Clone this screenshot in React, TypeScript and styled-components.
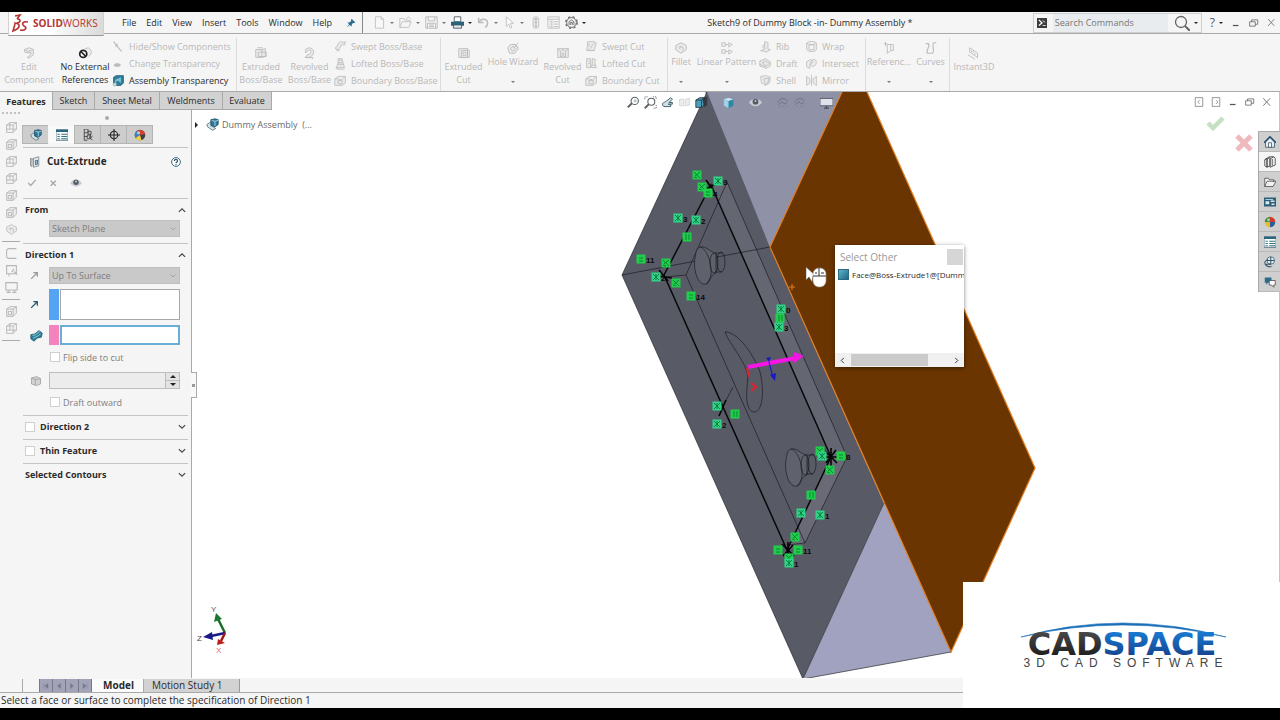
import React from "react";
import styled, { createGlobalStyle, css } from "styled-components";

const color = {
  chrome: "#f5f5f5",
  line: "#a9a9a9",
  text: "#2b2b2b",
  muted: "#b8b8b8",
  tab: "#d2d2d2",
};

const Global = createGlobalStyle`
  * { box-sizing: border-box; }
  body { margin: 0; background: #000; }
  body, button, input, select { font-family: "Open Sans", "Noto Sans", sans-serif; }
  button { border: 0; padding: 0; margin: 0; background: none; color: inherit; font-size: inherit; line-height: inherit; }
  a { color: inherit; text-decoration: none; }
  h2, h3, ul { margin: 0; padding: 0; list-style: none; }
`;

/* ---------- icons ---------- */

const S = "#777";
const glyphs: Record<string, React.ReactNode> = {
  pin: <g fill="#2c6f92"><path d="M9 1l6 6-2 1-2 0-2 3 0 3-3-3-5 4 4-5-3-3 3 0 3-2 0-2z" /></g>,
  page: <path d="M3 1h7l3 3v11H3zM10 1v3h3" fill="#fafafa" stroke={S} />,
  folder: <path d="M1 14V3h5l1 2h6v2M1 14l3-7h11l-3 7zM9 3l3-2 3 3" fill="none" stroke={S} />,
  save: <path d="M1 1h14v14H1zM4 1v5h8V1M3 15V9h10v6M5 11h6M5 13h6" fill="none" stroke={S} strokeWidth="1.2" />,
  print: (
    <g>
      <path d="M4 1h8v6H4z" fill="#fff" stroke="#3c4a55" />
      <path d="M0 7h16v5H0z" fill="#27637f" />
      <path d="M3 11h10v4H3z" fill="#dce6ea" stroke="#3c4a55" />
    </g>
  ),
  undo: <path d="M2 2v6h6M2 8c3-6 11-5 11 1 0 2-1 4-3 5" fill="none" stroke={S} strokeWidth="1.8" />,
  cursor: <path d="M4 1v12l3-3 2 5 2-1-2-5h4z" fill="#fff" stroke={S} />,
  traffic: (
    <g fill={S}>
      <rect x="5" y="1" width="7" height="14" rx="3" fill="#ddd" stroke={S} />
      <circle cx="8.500" cy="4" r="1.500" /><circle cx="8.500" cy="8" r="1.500" /><circle cx="8.500" cy="12" r="1.500" />
    </g>
  ),
  list: <path d="M1 1h14v14H1zM1 4h14M6 4v11M3 7h2M3 10h2M3 13h2M8 7h6M8 10h6M8 13h6" fill="none" stroke={S} />,
  gear: (
    <g fill="none" stroke="#555">
      <circle cx="8" cy="8" r="6" strokeWidth="1.100" />
      <circle cx="8" cy="8" r="7.200" strokeWidth="1.300" strokeDasharray="2.800 2.930" />
      <path d="M5 11V7l3-2 3 2v4M7 11V8h2v3" />
    </g>
  ),
  editComp: <path d="M3 4l5-2 5 2v6l-5 4-2-1 4-3V7L7 8 3 7zM3 4l4 2 6-2M7 6v2" fill="#ddd" stroke={S} />,
  noExt: (
    <g>
      <path d="M8 3l4-1 3 3v4l-3 3" fill="#eee" stroke="#bbb" />
      <circle cx="6" cy="9" r="4" fill="#fff" stroke="#222" strokeWidth="2" />
      <path d="M3 6l6 6" stroke="#222" strokeWidth="2" />
    </g>
  ),
  hide: <path d="M2 2l7 9 3 3M4 8l3-3" stroke={S} strokeWidth="1.500" fill="none" />,
  change: <path d="M2 10c1-3 8-3 9 0l-2 2H4z" fill={S} />,
  asmTrans: (
    <g>
      <path d="M2 4l3-2h9v9l-3 3H2z" fill="#2c8099" stroke="#215b74" />
      <path d="M4 7l7-3v7l-4-3-3 3z" fill="#7fc0d2" />
      <path d="M0 13l4-3 2 3-3 3z" fill="#c6d2d6" />
    </g>
  ),
  extrude: <path d="M2 4h7v9H2zM9 4l4-1v9l-4 1M5 7h9v5H5zM4 2h6" fill="#ddd" stroke={S} />,
  revolve: <path d="M3 4c4-4 10-1 9 4-1 4-5 6-9 5l2-3c3 0 4-2 4-4S6 4 3 8zM2 13h9v2" fill="#ddd" stroke={S} />,
  sweep: <path d="M2 9c3 0 2-6 6-7l4 1 2-1-1 4-4 0c-2 1 0 5-4 6l-3-1zM3 13h4" fill="#ddd" stroke={S} />,
  sweepCut: <path d="M3 2h9l2 2-3 9H2l1-5zM4 12c4-1 3-6 9-9M5 4v4M7 13h5" fill="#ddd" stroke={S} />,
  loft: <path d="M5 2h5l1 5 2 6H3l2-6zM4 9h8M6 4h4M5 7h6M2 13l2 2h9" fill="#ddd" stroke={S} />,
  loftCut: <path d="M2 2h5v11H2zM9 2l4 1-1 4 2 6H8l1-6zM4 5h2M4 8h2M9 10h4" fill="#ddd" stroke={S} />,
  boundary: <path d="M1 6l4-3h9v8l-4 3H1zM5 8h5v4H5zM1 6h4l4 1 5-4" fill="#ddd" stroke={S} />,
  wizard: <path d="M2 8l3-4h6l3 5-4 5H4zM5 9l3-3 3 3-3 3zM9 3l5 5M14 2l-5 6" fill="#ddd" stroke={S} />,
  cut: <path d="M2 3h10v10H2zM5 5h7v8H5zM12 3l2 2v8h-2M7 7h3v4H7z" fill="#e4e4e4" stroke={S} />,
  cutRev: <path d="M2 3h12v10H2zM5 6c1-2 5-2 6 0v6H9V8H7v4H5zM2 3l3 3M14 3l-3 3" fill="#e4e4e4" stroke={S} />,
  fillet: <path d="M2 5l6-3 6 3v5l-6 4-6-4zM5 7c4-2 7 1 5 4M6 9l3-3" fill="#ddd" stroke={S} />,
  pattern: <path d="M2 2h4v4H2zM2 10h4v4H2zM10 2l4 2-4 3zM10 10l4 2-4 3zM6 4h3M6 12h3" fill="#eee" stroke={S} />,
  rib: <path d="M2 13l5-2V2l4 1v8l3 1-5 3zM7 11l-3-3 3-3" fill="#ddd" stroke={S} />,
  draft: <path d="M1 5l7-3 6 4v5l-5 3-8-3zM4 7l4-2 5 3-4 3zM1 9l8 3" fill="#ddd" stroke={S} />,
  shell: <path d="M2 3l6-1 6 2-1 7-5 3-5-3zM6 6l6-1-1 6-3 2z" fill="#ddd" stroke={S} />,
  wrap: <path d="M2 4c2-3 10-3 12 0v8c-2 3-10 3-12 0zM5 6v6h6V6zM2 4c2 2 10 2 12 0" fill="#e4e4e4" stroke={S} />,
  intersect: <path d="M2 12V6l5-3 3 3-4 3v5zM7 9c-1-8 8-7 7-2s-6 6-7 2z" fill="#e4e4e4" stroke={S} />,
  mirror: <path d="M2 3l4 3v5l-4 3zM14 3l-4 3v5l4 3zM8 1v14" fill="#e4e4e4" stroke={S} />,
  reference: <path d="M2 3h4M4 1v5M6 4h7v7l-3 0-4 3zM10 4v7" fill="none" stroke={S} />,
  curves: <path d="M2 3h3c3 4-4 7-1 11h6c3-4-2-7 1-12h3" fill="none" stroke={S} strokeWidth="1.300" />,
  instant: <path d="M3 2v5l9 6M3 2l9 6v6M5 5v2M7 6v2M9 8v2M1 10l8 5" fill="none" stroke={S} />,
  lens: (
    <g fill="none" stroke="#5b6166">
      <circle cx="9.500" cy="6" r="4.500" strokeWidth="1.300" />
      <path d="M6 9l-5 5" strokeWidth="2.400" />
      <path d="M8 6h4M10 4v4" stroke="#8aa" />
    </g>
  ),
  lensArea: (
    <g fill="none" stroke="#5b6166">
      <path d="M1 4V1h4M11 1h4v3M15 11v4h-4" strokeDasharray="1.500 1" />
      <circle cx="9" cy="7" r="4.300" strokeWidth="1.300" /><path d="M6 10l-5 5" strokeWidth="2.400" />
    </g>
  ),
  prevView: <path d="M2 11C1 8 5 8 7 6l5-4 2 2-4 4h4v2H9l3 1v2H5c-2 0-3-1-3-2z" fill="#cfe0e6" stroke="#46606b" strokeWidth="1.200" />,
  section: <path d="M2 4h5v8H2zM9 4l5-1v8l-5 1z" fill="#ddd" stroke="#999" />,
  cubeView: (
    <g>
      <path d="M1 5l5-3h6v8l-4 4H1z" fill="#4d9dbb" stroke="#23323a" />
      <path d="M1 5h7v9M8 5l4-3" fill="none" stroke="#23323a" /><path d="M9 3l6-2v10l-4 3z" fill="#343a42" />
    </g>
  ),
  display: (
    <g>
      <path d="M2 4l6-2 6 2v8l-6 3-6-3z" fill="#2f86a5" />
      <path d="M2 4l6 2v9l-6-3z" fill="#9fd2e2" /><path d="M2 4l6-2 6 2-6 2z" fill="#c9e6ee" />
    </g>
  ),
  eye: <g><path d="M0 8c4-6 12-6 16 0-4 6-12 6-16 0z" fill="#c9ccd2" /><circle cx="8" cy="7" r="3.600" fill="#555a66" /><circle cx="8" cy="6" r="1.200" fill="#aeb" /></g>,
  scene: <path d="M2 8c3-6 9-6 12-2M3 11l4-4 4 3 3-3M5 13h1M9 13h1M13 13h1" stroke="#666b78" fill="none" />,
  monitor: <g><path d="M0 3h16v9H0z" fill="#dfe2ea" stroke="#4b4e58" /><path d="M5 15h6M8 12v3" stroke="#4b4e58" strokeWidth="1.500" /></g>,
  feature: (
    <g>
      <path d="M7 4L1 8l1 3 6 4 4-2-6-4 1-2z" fill="#d2e2e8" stroke="#5e6f78" />
      <path d="M6 2l5-1 4 1v6l-4 3-5-2z" fill="#2c7898" stroke="#1d5069" /><path d="M7 3l4 1 4-1M11 4v6" stroke="#bfe0ea" fill="none" />
    </g>
  ),
  props: <g><path d="M0 1h16v14H0z" fill="#fff" stroke="#31546a" /><path d="M0 1h16v3H0z" fill="#27677f" /><path d="M2 7h3M2 10h3M2 13h3M7 7h8M7 10h8M7 13h8" stroke="#31747f" strokeWidth="1.500" /></g>,
  config: <g fill="none" stroke="#444" strokeWidth="1.200"><path d="M3 0h5v5H3zM3 5v10h4M3 10h4M8 3h4v4H8zM7 8h4v5H7zM12 7l-2 4 4 4M11 13l3-4" /></g>,
  target: <g fill="none" stroke="#222" strokeWidth="1.400"><circle cx="8" cy="8" r="5" /><path d="M8 0v16M0 8h16" /></g>,
  ball: (
    <g>
      <circle cx="8" cy="8" r="7" fill="#e9bb2e" />
      <path d="M8 8L1 8A7 7 0 0 1 8 1z" fill="#3b8f4a" /><path d="M8 8V1a7 7 0 0 1 7 7z" fill="#cf3b30" />
      <path d="M8 8h7a7 7 0 0 1-7 7z" fill="#2a5f9e" /><circle cx="6" cy="5" r="2" fill="#fff" opacity="0.550" />
    </g>
  ),
  panelBall: (
    <g>
      <circle cx="8" cy="8" r="7" fill="#3a3f48" />
      <path d="M8 8L2 12A7 7 0 0 1 5 2z" fill="#3f83b8" /><path d="M8 8L5 2a7 7 0 0 1 10 5z" fill="#d8402f" />
      <path d="M8 8L2 12a7 7 0 0 0 8 3z" fill="#f0d23c" /><circle cx="6" cy="5" r="2" fill="#fff" opacity="0.650" />
    </g>
  ),
  cutExtrude: <g><path d="M2 3l2 1v10l-2-1zM4 4h2M6 3l7-2v12l-7 2z" fill="#e2e6e9" stroke="#707a82" /><path d="M8 6l4-1v6l-4 1z" fill="#2f6f8d" /><path d="M9 7l2-1v4l-2 1z" fill="#9cc3d3" /></g>,
  help: <g><circle cx="8" cy="8" r="7" fill="#fff" stroke="#3a6c86" strokeWidth="1.600" /><path d="M5.500 6.500c0-4 5-3 5 0 0 1.500-2.500 1.500-2.500 3.500M8 11.500v1.500" fill="none" stroke="#33505f" strokeWidth="1.900" /></g>,
  check: <path d="M2 8l4 4 8-9" fill="none" stroke="#a9a9a9" strokeWidth="2.200" />,
  cross: <path d="M3 3l9 9M12 3l-9 9" stroke="#a4a4a4" strokeWidth="2.200" />,
  arrow: <path d="M2 14L12 4M6 3h7v7" fill="none" stroke="currentColor" strokeWidth="2.200" />,
  surface: <g><path d="M1 7l5-1 5-4 4 3-1 5-5 1-4 4-4-3z" fill="#2f8299" stroke="#1d5a70" /><path d="M3 8l4-1 5-4M4 11l5-2 4-3" stroke="#9ad0dc" fill="none" /></g>,
  draftAngle: <path d="M2 4l7-2 5 3v7l-5 2-7-2zM7 6l7-1M7 6v8M2 4l5 2" fill="#d4d4d4" stroke="#999" />,
  cubeA: <path d="M2 5l4-3h8v8l-4 4H2zM2 5h8v9M10 5l4-3M6 2v8H2M6 10h8" fill="none" stroke="#b0b0b0" />,
  cubeB: <path d="M2 5l4-3h8v8l-4 4H2zM2 5h8v9M10 5l4-3M4 8h4v4H4z" fill="#eee" stroke="#b0b0b0" />,
  sheet: <path d="M14 2H4L2 4v8l2 2h10" fill="none" stroke="#b5b5b5" strokeWidth="1.300" />,
  note: <path d="M2 2h12v10H2zM5 12v3M11 9l4 4M8 10l3-4" fill="none" stroke="#b5b5b5" strokeWidth="1.300" />,
  screen: <path d="M1 2h14v9H1zM4 11v3M2 14h5M12 11v3M9 14h5" fill="none" stroke="#b5b5b5" strokeWidth="1.300" />,
  home: <g><path d="M2 8l6-6 6 6v7H2z" fill="#e6eef2" stroke="#2d4f63" /><path d="M0 9l8-8 8 8" fill="none" stroke="#234d68" strokeWidth="2" /><path d="M6 9h4v6H6z" fill="#fff" stroke="#2d4f63" /></g>,
  library: <g fill="#eee" stroke="#333"><path d="M1 5l3-2 0 12-3-2zM4 4l4-2v11l-4 2zM8 4l5-3 2 2v9l-7 3zM11 4v9M1 5l6-4 6 0" /></g>,
  open: <path d="M1 14V3h5l1 2h6v3M1 14l3-7h12l-4 7z" fill="#f1f1f1" stroke="#444" />,
  palette: <g><path d="M0 2h16v12H0z" fill="#2b6078" /><path d="M2 7h5v4H2zM9 6h5v2H9zM10 10h4v2h-4zM2 4h10v1H2z" fill="#dfeaf0" /></g>,
  forum: <g fill="#e6eef2" stroke="#31546a"><circle cx="9" cy="6" r="5" /><path d="M1 8l4-4M1 8c0 5 5 7 9 6M9 1v10M4 6h10M3 11h6" fill="none" strokeWidth="1.400" /></g>,
  chat: <g><path d="M1 2h9v7H5l-2 3V9H1z" fill="#2d6b8a" /><path d="M7 6h8v6h-2v3l-3-3H7z" fill="#fff" stroke="#444" /></g>,
  min: <path d="M3 12h9" stroke="#555" strokeWidth="2" />,
  restore: <path d="M1 6h9v7H1zM4 6V3h10v7h-4" fill="none" stroke="#666" strokeWidth="1.300" />,
  close: <path d="M2 2l11 12M13 2L2 14" stroke="#666" strokeWidth="1.400" />,
  paneL: <path d="M2 1h12v14H2zM9 5L6 8l3 3" fill="none" stroke="#777" strokeWidth="1.200" />,
  paneR: <path d="M2 1h12v14H2zM8 5l3 3-3 3" fill="none" stroke="#777" strokeWidth="1.200" />,
  terminal: <g><path d="M0 0h16v16H0z" fill="#3d3d3d" /><path d="M3 3l5 5-5 4" fill="none" stroke="#fff" strokeWidth="2" /><path d="M9 12h5M9 4l4 3" stroke="#ddd" strokeWidth="1.500" /></g>,
  search: <g fill="none" stroke="#666"><circle cx="7" cy="7" r="5.500" strokeWidth="1.300" /><path d="M11 11l5 5" strokeWidth="2" /></g>,
  up: <path d="M3 11l5-5 5 5" fill="none" stroke="#444" strokeWidth="1.800" />,
  down: <path d="M3 5l5 5 5-5" fill="none" stroke="#444" strokeWidth="1.800" />,
  left: <path d="M11 2L5 8l6 6" fill="none" stroke="#333" strokeWidth="2.200" />,
  right: <path d="M5 2l6 6-6 6" fill="none" stroke="#333" strokeWidth="2.200" />,
};

const Glyph = styled.svg<{ $size: number; $faded?: boolean }>`
  display: block;
  flex: none;
  width: ${(p) => p.$size}px;
  height: ${(p) => p.$size}px;
  opacity: ${(p) => (p.$faded ? 0.45 : 1)};
`;

function Icon({ name, size = 12, faded }: { name: string; size?: number; faded?: boolean }) {
  return (
    <Glyph viewBox="0 0 16 16" $size={size} $faded={faded} aria-hidden="true">
      {glyphs[name]}
    </Glyph>
  );
}

const Caret = styled.span<{ $dark?: boolean }>`
  width: 0;
  height: 0;
  border: 2px solid transparent;
  border-top-color: ${(p) => (p.$dark ? "#222" : "#777")};
  border-bottom: 0;
`;

/* ---------- frame ---------- */

const Page = styled.div`
  display: flex;
  flex-direction: column;
  min-height: 100vh;
  padding: 12px 0;
  position: relative;
  color: ${color.text};
  font-size: 9px;
  line-height: 13px;
`;

const TitleBar = styled.header`
  display: flex;
  align-items: center;
  height: 22px;
  background: ${color.chrome};
  border-bottom: 1px solid ${color.line};
`;

const Brand = styled.div`
  align-self: flex-start;
  display: flex;
  align-items: center;
  gap: 4px;
  width: 96px;
  height: 24px;
  margin-left: 8px;
  padding-left: 3px;
  position: relative;
  z-index: 2;
  flex: none;
  color: #b5342f;
  font-size: 10px;
  background: linear-gradient(100deg, #fff 45%, #d9d9d9);
  border: 1px solid #d0d0d0;
  border-top: 0;
  border-bottom-color: #999;
`;

const BrandMark = styled.svg`
  width: 17px;
  height: 19px;
`;

const Menu = styled.nav`
  display: flex;
  gap: 10px;
  margin-left: 18px;
  width: 222px;
  flex: none;
`;

const PinButton = styled.button`
  display: flex;
  align-items: center;
  width: 19px;
  padding-left: 2px;
  height: 21px;
  border-right: 1px solid #888;
  flex: none;
`;

const QuickTools = styled.div`
  display: flex;
  align-items: center;
  flex: none;
  margin-left: 10px;
`;

const QuickButton = styled.button<{ $w: number }>`
  display: flex;
  align-items: center;
  gap: 4px;
  width: ${(p) => p.$w}px;
`;

const DocTitle = styled.div`
  flex: 1;
  text-align: center;
  white-space: nowrap;
  overflow: hidden;
`;

const SearchBox = styled.form`
  display: flex;
  align-items: center;
  width: 169px;
  height: 20px;
  border: 1px solid #cfcfcf;
  padding: 0 3px;
  gap: 6px;
  flex: none;
`;

const SearchInput = styled.input`
  flex: 1;
  min-width: 0;
  height: 18px;
  border: 0;
  padding: 0 2px;
  background: #e8ecef;
  font-size: 9px;
  &::placeholder { color: #777; opacity: 1; }
`;

const PlainButton = styled.button`
  display: flex;
  align-items: center;
  gap: 4px;
`;

const WindowButtons = styled.div`
  display: flex;
  align-items: center;
  gap: 8px;
  padding: 0 4px 0 8px;
  flex: none;
  font-size: 12px;
  font-weight: 600;
  color: #555;
`;

/* ---------- ribbon ---------- */

const Ribbon = styled.div`
  display: flex;
  height: 58px;
  background: ${color.chrome};
  border-bottom: 1px solid ${color.line};
  padding-top: 4px;
`;

const Group = styled.div<{ $w: number }>`
  display: flex;
  flex: none;
  width: ${(p) => p.$w}px;
  border-right: 1px solid #dcdcdc;
`;

const BigButton = styled.button<{ $w: number; $on?: boolean; $high?: boolean }>`
  display: flex;
  flex-direction: column;
  align-items: center;
  width: ${(p) => p.$w}px;
  padding-top: ${(p) => (p.$high ? 3 : 8)}px;
  color: ${(p) => (p.$on ? color.text : color.muted)};
  text-align: center;
  white-space: pre;
  flex: none;
  ${(p) =>
    p.$high &&
    css`
      & > ${Caret} { margin-top: 13px; }
    `}
`;

const CommandList = styled.div<{ $w: number }>`
  display: flex;
  flex-direction: column;
  width: ${(p) => p.$w}px;
  flex: none;
`;

const CommandButton = styled.button<{ $on?: boolean }>`
  display: flex;
  align-items: center;
  gap: 4px;
  height: 17px;
  color: ${(p) => (p.$on ? color.text : color.muted)};
  white-space: nowrap;
`;

type Big = { label: string; icon: string; w: number; on?: boolean; menu?: boolean };
type Col = { w: number; items: [string, string, boolean?][] };

const ribbon: { w: number; bigs: Big[]; cols: Col[] }[] = [
  {
    w: 237,
    bigs: [
      { label: "Edit\nComponent", icon: "editComp", w: 58 },
      { label: "No External\nReferences", icon: "noExt", w: 54, on: true },
    ],
    cols: [{ w: 120, items: [["hide", "Hide/Show Components"], ["change", "Change Transparency"], ["asmTrans", "Assembly Transparency", true]] }],
  },
  {
    w: 204,
    bigs: [
      { label: "Extruded\nBoss/Base", icon: "extrude", w: 48 },
      { label: "Revolved\nBoss/Base", icon: "revolve", w: 49 },
    ],
    cols: [{ w: 104, items: [["sweep", "Swept Boss/Base"], ["loft", "Lofted Boss/Base"], ["boundary", "Boundary Boss/Base"]] }],
  },
  {
    w: 227,
    bigs: [
      { label: "Extruded\nCut", icon: "cut", w: 45 },
      { label: "Hole Wizard", icon: "wizard", w: 54, menu: true },
      { label: "Revolved\nCut", icon: "cutRev", w: 45 },
    ],
    cols: [{ w: 80, items: [["sweepCut", "Swept Cut"], ["loftCut", "Lofted Cut"], ["boundary", "Boundary Cut"]] }],
  },
  {
    w: 198,
    bigs: [
      { label: "Fillet", icon: "fillet", w: 26, menu: true },
      { label: "Linear Pattern", icon: "pattern", w: 65, menu: true },
    ],
    cols: [
      { w: 46, items: [["rib", "Rib"], ["draft", "Draft"], ["shell", "Shell"]] },
      { w: 58, items: [["wrap", "Wrap"], ["intersect", "Intersect"], ["mirror", "Mirror"]] },
    ],
  },
  {
    w: 84,
    bigs: [
      { label: "Referenc...", icon: "reference", w: 46, menu: true },
      { label: "Curves", icon: "curves", w: 37, menu: true },
    ],
    cols: [],
  },
];

/* ---------- workspace ---------- */

const Workspace = styled.main`
  flex: 1;
  display: grid;
  grid-template-columns: 192px minmax(0, 1fr);
  grid-template-rows: 18px 1fr;
  background: #fff;
  position: relative;
`;

const CommandTabs = styled.nav`
  grid-column: 1 / 3;
  grid-row: 1;
  justify-self: start;
  display: flex;
  position: relative;
  z-index: 1;
  font-size: 9px;
`;

const CommandTab = styled.button<{ $active?: boolean; $w: number }>`
  width: ${(p) => p.$w}px;
  font-weight: ${(p) => (p.$active ? 700 : 400)};
  background: ${(p) => (p.$active ? color.chrome : color.tab)};
  border-right: 1px solid ${color.line};
  border-bottom: ${(p) => (p.$active ? "0" : `1px solid ${color.line}`)};
`;

const LeftDock = styled.aside`
  grid-column: 1;
  grid-row: 2;
  display: flex;
  background: ${color.chrome};
  border-right: 1px solid ${color.line};
  position: relative;
`;

const ViewStrip = styled.div`
  display: flex;
  flex-direction: column;
  align-items: center;
  width: 22px;
  padding-top: 2px;
  flex: none;
`;

const Grip = styled.div`
  width: 18px;
  height: 7px;
  border-top: 2px dotted #c0c0c0;
`;

const StripButton = styled.button`
  display: flex;
  align-items: center;
  height: 17px;
`;

const StripLine = styled.div`
  width: 18px;
  height: 4px;
  border-bottom: 1px solid #aaa;
  margin-bottom: 3px;
`;

const PropertyManager = styled.section`
  flex: 1;
  min-width: 0;
  display: flex;
  flex-direction: column;
`;

const PanelHandle = styled.div`
  height: 15px;
  display: flex;
  justify-content: center;
  align-items: center;
  &::before { content: ""; width: 4px; height: 4px; border-radius: 50%; background: #aaa; }
`;

const PanelTabs = styled.div`
  display: flex;
  height: 19px;
`;

const PanelTab = styled.button<{ $active?: boolean }>`
  display: flex;
  align-items: center;
  justify-content: center;
  width: 27px;
  margin-right: -1px;
  border: 1px solid ${(p) => (p.$active ? color.chrome : "#b4b4b4")};
  background: ${(p) => (p.$active ? "#fafafa" : "#cdcdcd")};
`;

const PanelHead = styled.div`
  margin: 3px 3px 0 1px;
  border-top: 1px solid #c4c4c4;
`;

const HeadRow = styled.div`
  display: flex;
  align-items: center;
  gap: 6px;
  height: 27px;
  padding: 0 7px 0 6px;
`;

const PanelTitle = styled.h2`
  flex: 1;
  font-size: 10px;
  font-weight: 700;
`;

const ActionRow = styled.div`
  display: flex;
  align-items: center;
  gap: 12px;
  height: 23px;
  padding: 0 4px 7px;
`;

const Section = styled.section`
  margin: 0 3px 0 1px;
  padding: 0 8px 6px 2px;
  border-top: 1px solid #c4c4c4;
`;

const SectionHead = styled.div`
  display: flex;
  align-items: center;
  gap: 5px;
  height: 21px;
  margin-right: -7px;
`;

const FoldedHead = styled(SectionHead)`
  height: 17px;
  margin-top: 2px;
  margin-bottom: -2px;
`;

const SectionTitle = styled.h3`
  flex: 1;
  font-size: 9px;
  font-weight: 700;
`;

const Fields = styled.div`
  display: flex;
  flex-direction: column;
  gap: 5px;
  padding-top: 2px;
`;

const Field = styled.div`
  display: flex;
`;

const FieldIcon = styled.div<{ $faded?: boolean }>`
  display: flex;
  align-items: center;
  width: 24px;
  padding-left: 5px;
  flex: none;
  color: ${(p) => (p.$faded ? "#999" : "#245672")};
`;

const GreySelect = styled.select`
  min-width: 0;
  height: 17px;
  appearance: none;
  border: 1px solid #bdbdbd;
  border-radius: 0;
  padding: 0 2px;
  background: #c9c9c9;
  color: #7d7d7d;
  font-size: 9px;
  opacity: 1;
`;

const SelectWrap = styled.div`
  flex: 1;
  display: grid;
  align-items: center;
  & > * { grid-area: 1 / 1; }
  & > svg { justify-self: end; margin-right: 3px; opacity: 0.3; }
`;

const Swatch = styled.span<{ $c: string }>`
  width: 10px;
  margin-right: 1px;
  background: ${(p) => p.$c};
  flex: none;
`;

const PickBox = styled.input<{ $h: number; $focus?: boolean }>`
  flex: 1;
  min-width: 0;
  height: ${(p) => p.$h}px;
  border: ${(p) => (p.$focus ? "2px solid #6aaed6" : "1px solid #a8a8a8")};
  background: #fff;
  padding: 0 4px;
  outline: 0;
`;

const Tick = styled.input`
  appearance: none;
  width: 10px;
  height: 10px;
  margin: 0;
  border: 1px solid #cfcfcf;
  background: #fff;
  flex: none;
`;

const TickLabel = styled.label`
  display: flex;
  align-items: center;
  gap: 3px;
  height: 14px;
  padding-left: 25px;
  color: #7d7d7d;
`;

const SpinRow = styled(Field)`
  margin: 3px 0 1px;
`;

const SpinInput = styled.input`
  flex: 1;
  min-width: 0;
  height: 17px;
  border: 1px solid #bdbdbd;
  border-right: 0;
  background: #ececec;
  padding: 0 4px;
`;

const Spinner = styled.div`
  display: flex;
  flex-direction: column;
  width: 15px;
  border: 1px solid #bdbdbd;
`;

const SpinButton = styled.button<{ $down?: boolean }>`
  flex: 1;
  display: flex;
  align-items: center;
  justify-content: center;
  background: #e3e3e3;
  border-top: ${(p) => (p.$down ? "1px solid #bdbdbd" : "0")};
  & > ${Caret} {
    border-width: 3px 3px 0;
    transform: ${(p) => (p.$down ? "none" : "rotate(180deg)")};
  }
`;

const SplitHandle = styled.div`
  position: absolute;
  left: 191px;
  top: 262px;
  width: 6px;
  height: 26px;
  display: flex;
  align-items: center;
  justify-content: center;
  background: #f8f8f8;
  border: 1px solid #aaa;
  border-left: 0;
  z-index: 1;
  &::before { content: ""; width: 3px; height: 3px; background: #999; }
`;

/* ---------- graphics area ---------- */

const Viewport = styled.section`
  grid-column: 2;
  grid-row: 1 / 3;
  position: relative;
  border-right: 1px solid #c4c4c4;
  min-height: 586px;
  overflow: hidden;
`;

const SceneSvg = styled.svg`
  display: block;
  position: absolute;
  width: 1088px;
  height: 586px;
  font-family: "Liberation Sans", sans-serif;
`;

const TreeRoot = styled.button`
  position: absolute;
  left: 3px;
  top: 26px;
  display: flex;
  align-items: center;
  gap: 3px;
  color: #6a6a6a;
  font-size: 9px;
`;

const RightCaret = styled.span`
  border: 3px solid transparent;
  border-left-color: #222;
  border-right: 0;
  margin-right: 5px;
`;

const HeadsUp = styled.div`
  position: absolute;
  left: 435px;
  top: 4px;
  display: flex;
`;

const HudButton = styled.button<{ $gap?: boolean }>`
  display: flex;
  width: ${(p) => (p.$gap ? 27 : 17)}px;
`;

const DocButtons = styled.div`
  position: absolute;
  right: 7px;
  top: 5px;
  display: flex;
  gap: 7px;
`;

const Confirm = styled.svg`
  position: absolute;
  right: 26px;
  top: 22px;
  width: 50px;
  height: 40px;
`;

const TaskPane = styled.nav`
  position: absolute;
  right: 0;
  top: 39px;
  width: 22px;
  z-index: 1;
  border: 1px solid #a9a9a9;
  border-right: 0;
  border-bottom: 0;
`;

const TaskTab = styled.button<{ $active?: boolean }>`
  display: flex;
  align-items: center;
  justify-content: center;
  width: 100%;
  height: 20px;
  background: ${(p) => (p.$active ? "#f5f5f5" : "#cfcfcf")};
  border-bottom: 1px solid #b9b9b9;
`;

const Popup = styled.div`
  position: absolute;
  left: 643px;
  top: 153px;
  width: 129px;
  height: 122px;
  display: flex;
  flex-direction: column;
  background: #fff;
  box-shadow: 0 1px 4px rgba(0, 0, 0, 0.5);
`;

const PopupHead = styled.div`
  display: flex;
  align-items: center;
  justify-content: space-between;
  height: 23px;
  padding: 1px 1px 0 5px;
  color: #999;
  font-size: 10px;
`;

const PopupClose = styled.button`
  width: 16px;
  height: 16px;
  background: #d6d6d6;
`;

const PopupList = styled.ul`
  flex: 1;
  overflow: hidden;
`;

const PopupItem = styled.li`
  display: flex;
  align-items: center;
  gap: 3px;
  padding-left: 3px;
  white-space: nowrap;
  font-size: 8px;
  &::before { content: ""; width: 9px; height: 9px; background: linear-gradient(135deg, #5cb4cc, #1f6685); border: 1px solid #2d6a82; flex: none; }
`;

const ScrollBar = styled.div`
  display: flex;
  align-items: center;
  height: 14px;
  padding: 0 4px;
  gap: 5px;
  background: #f0f0f0;
`;

const ScrollTrack = styled.div`
  flex: 1;
  height: 12px;
  &::before { content: ""; display: block; width: 77px; height: 12px; background: #cbcbcb; }
`;

/* ---------- footer ---------- */

const SheetTabs = styled.div`
  display: flex;
  height: 15px;
  background: ${color.chrome};
  border-bottom: 1px solid ${color.line};
  padding: 1px 0 0 22px;
`;

const SheetNav = styled.div`
  display: flex;
  margin-left: 17px;
  border-left: 1px solid #77778e;
  flex: none;
`;

const Stub = styled.span`
  width: 1px;
  background: #aaa;
  margin-right: -1px;
`;

const NavButton = styled.button`
  display: flex;
  align-items: center;
  justify-content: center;
  width: 13px;
  background: #a3a3b8;
  border-right: 1px solid #77778e;
  color: #77778e;
`;

const SheetTab = styled.button<{ $active?: boolean; $w: number }>`
  width: ${(p) => p.$w}px;
  font-size: 10px;
  font-weight: ${(p) => (p.$active ? 700 : 400)};
  text-align: ${(p) => (p.$active ? "center" : "left")};
  padding-left: ${(p) => (p.$active ? 2 : 8)}px;
  background: ${(p) => (p.$active ? "#fbfbfb" : color.tab)};
  border-right: 1px solid ${(p) => (p.$active ? "#aaa" : "#999")};
`;

const StatusBar = styled.footer`
  height: 15px;
  padding: 0 1px;
  background: ${color.chrome};
  font-size: 10px;
  line-height: 15px;
`;

const Sponsor = styled.div`
  position: absolute;
  right: 0;
  bottom: 12px;
  width: 317px;
  height: 126px;
  background: #fff;
  z-index: 3;
`;

const SponsorSvg = styled.svg`
  display: block;
  width: 317px;
  height: 126px;
`;

/* ---------- drawing data ---------- */

type Rel = [number, number, "x" | "s" | "=" | "|", string?];
const relations: Rel[] = [
  [697, 175, "x"], [718, 181, "s", "3"], [702, 187, "x"], [708, 193, "=", "4"],
  [678, 218, "s", "3"], [696, 220, "s", "2"], [687, 237, "|"], [641, 259, "=", "11"],
  [666, 263, "x"], [656, 277, "s", "2"], [676, 283, "x"], [691, 296, "=", "14"],
  [781, 309, "s", "0"], [780, 318, "|"], [779, 327, "s", "3"],
  [717, 406, "s"], [735, 414, "|"], [717, 424, "s", "2"],
  [820, 451, "x"], [822, 456, "s"], [841, 456, "=", "8"], [830, 470, "x"],
  [811, 495, "|"], [801, 513, "s"], [820, 515, "s", "1"], [795, 537, "x"],
  [778, 550, "="], [798, 550, "=", "11"], [789, 558, "x"], [789, 563, "s", "1"],
];
const marks = { x: "M-3 -3L3 3M3 -3L-2 1M-3 2L0 3", s: "M-3 -3L3 3M3 -3L-3 3M0 -3V3", "=": "M-2 -1H2M-2 2H2", "|": "M-1 -3V3M2 -3V3" };

function Scene() {
  return (
    <SceneSvg viewBox="192 92 1088 586" role="img" aria-label="Dummy Assembly model">
      <polygon points="705,92 843,92 770,247" fill="#8f92a7" />
      <polygon points="622,275 707,92 770,247 884,503 803,679" fill="#585b65" />
      <polygon points="884,503 951,652 803,679" fill="#a0a2bf" />
      <polygon points="842,92 867,92 1035,468 951,652 770,247" fill="#6a3500" />
      <path d="M842 92L770 247L951 652L1035 468L867 92" fill="none" stroke="#e07e22" strokeWidth="1.200" />
      <path d="M707 92L622 275L803 679L951 652M803 679L884 503" fill="none" stroke="#2a2b31" strokeWidth="0.700" />
      <polygon points="711,185 727,182 847,457 831,457" fill="#646672" />
      <polygon points="831,457 847,457 805,543 787,550" fill="#696a75" />
      <g fill="none" stroke="#1c1d22" strokeWidth="0.700">
        <path d="M622 275L770 247M727 182L686 275L805 543L847 457ZM664 277L686 275M787 545L805 543M711 185L727 182" />
        <g id="screw">
          <path d="M700 247C707 246 709 252 716 253V273C711 274 709 282 706 284C698 286 693 270 695 258C696 251 697 248 700 247Z" fill="#5f616c" />
          <path d="M700 247C706 248 712 262 711 274C710 281 708 284 706 284" />
          <path d="M716 253H723M715 272H722" /><ellipse cx="714" cy="263" rx="4" ry="10" /><ellipse cx="721" cy="262" rx="4" ry="10" />
        </g>
        <use href="#screw" x="91" y="202" />
        <path d="M725 332C735 331 752 350 760 372C766 398 760 413 754 412C747 411 745 400 748 378C747 362 729 344 725 332Z" />
        <path d="M733 387L722 408" />
      </g>
      <path d="M711 185L664 275L787 550L831 457Z" fill="none" stroke="#08080a" strokeWidth="1.500" />
      <path d="M706 180L713 190M706 189L716 184M659 270L668 281M658 276L672 278M726 400L719 416M782 544L794 556M783 556L793 545M788 542V558M825 451L837 463M826 463L836 450M831 448V466M824 457H840" stroke="#050505" strokeWidth="1.600" />
      {relations.map(([x, y, kind, n], i) => (
        <g key={i} transform={`translate(${x} ${y})`}>
          <rect x="-4.500" y="-4.500" width="9" height="9" fill={kind === "s" ? "#2fd38a" : "#1fce4a"} />
          <path d={marks[kind]} stroke="#0a7a34" fill="none" strokeWidth="0.900" />
          {n && <text x="5" y="4" fontSize="8" fontWeight="700" fill="#0a0a0a">{n}</text>}
        </g>
      ))}
      <path d="M748 367L796 358" stroke="#f714e6" strokeWidth="4" />
      <path d="M804 356L794 352V363Z" fill="#f714e6" />
      <path d="M769 362L773 378" stroke="#1919c8" strokeWidth="1.200" />
      <path d="M766 358L771 357L769 362ZM770 375L776 373L775 381Z" fill="#1919c8" />
      <path d="M747 368L749 377M751 383L756 387L751 391" stroke="#e8202a" strokeWidth="2" fill="none" />
      <path d="M789 287H795M792 284V290" stroke="#e07e22" />
      <path d="M806 267V280L809 277L812 282L813 276H816Z" fill="#fff" stroke="#555" strokeWidth="0.500" />
      <rect x="813" y="268" width="13" height="19" rx="6" fill="#fff" stroke="#999" strokeWidth="0.600" />
      <path d="M813 276H826M819 268V276M815 273H817M821 273H824" stroke="#333" />
      <g>
        <path d="M225 633L218 619" stroke="#1b6e2c" strokeWidth="2.500" /><path d="M216 613L214 622L222 619Z" fill="#1b7a30" />
        <path d="M225 633L211 636" stroke="#191987" strokeWidth="2.500" /><path d="M203 637L212 632L213 640Z" fill="#191987" />
        <path d="M225 633L221 641" stroke="#a01818" strokeWidth="2.500" /><path d="M217 645L218 639L225 643Z" fill="#c01c1c" />
        <text x="211" y="612" fontSize="8" fill="#555">Y</text>
        <text x="197" y="641" fontSize="8" fill="#444">Z</text>
        <text x="216" y="653" fontSize="8" fill="#d66">X</text>
      </g>
    </SceneSvg>
  );
}

const quick: [string, number, boolean, boolean][] = [
  ["page", 26, true, true], ["folder", 26, true, true], ["save", 26, true, true], ["print", 26, true, false],
  ["undo", 26, true, true], ["cursor", 26, true, true], ["traffic", 18, false, true], ["list", 18, false, true], ["gear", 22, true, false],
];

export default function App() {
  return (
    <>
      <Global />
      <Page>
        <TitleBar>
          <Brand>
            <BrandMark viewBox="0 0 17 19" fill="none" stroke="#b5342f" strokeWidth="1.600" aria-hidden="true">
              <path d="M3 2L8 1L5 5M5 5C9 5 9 8 5 9M2 9C9 9 9 14 1 17L3 10M16 8C11 7 9 10 12 12C16 14 13 17 8 16" />
            </BrandMark>
            <span><b>SOLID</b>WORKS</span>
          </Brand>
          <Menu>
            {["File", "Edit", "View", "Insert", "Tools", "Window", "Help"].map((m) => <a key={m} href="#menu">{m}</a>)}
          </Menu>
          <PinButton aria-label="Pin menu"><Icon name="pin" size={10} /></PinButton>
          <QuickTools>
            {quick.map(([n, w, menu, faded]) => (
              <QuickButton key={n} $w={w} aria-label={n}>
                <Icon name={n} size={13} faded={faded} />
                {menu && <Caret $dark={!faded} />}
              </QuickButton>
            ))}
          </QuickTools>
          <DocTitle>Sketch9 of Dummy Block -in- Dummy Assembly *</DocTitle>
          <SearchBox>
            <Icon name="terminal" size={10} />
            <SearchInput aria-label="Search Commands" placeholder="Search Commands" />
            <PlainButton type="button" aria-label="Search"><Icon name="search" size={16} /><Caret $dark /></PlainButton>
          </SearchBox>
          <WindowButtons>
            <PlainButton aria-label="Help">?<Caret $dark /></PlainButton>
            <PlainButton aria-label="Minimize"><Icon name="min" size={10} /></PlainButton>
            <PlainButton aria-label="Restore"><Icon name="restore" size={10} /></PlainButton>
            <PlainButton aria-label="Close"><Icon name="close" size={9} /></PlainButton>
          </WindowButtons>
        </TitleBar>

        <Ribbon>
          {ribbon.map((g, i) => (
            <Group key={i} $w={g.w}>
              {g.bigs.map((b) => (
                <BigButton key={b.label} $w={b.w} $on={b.on} $high={b.menu}>
                  <Icon name={b.icon} size={14} faded={!b.on} />
                  {b.label}
                  {b.menu && <Caret />}
                </BigButton>
              ))}
              {g.cols.map((c, j) => (
                <CommandList key={j} $w={c.w}>
                  {c.items.map(([icon, label, on]) => (
                    <CommandButton key={label} $on={on}><Icon name={icon} size={13} faded={!on} />{label}</CommandButton>
                  ))}
                </CommandList>
              ))}
            </Group>
          ))}
          <BigButton $w={48}><Icon name="instant" size={14} faded />Instant3D</BigButton>
        </Ribbon>

        <Workspace>
          <CommandTabs>
            <CommandTab $active $w={53}>Features</CommandTab>
            <CommandTab $w={42}>Sketch</CommandTab>
            <CommandTab $w={65}>Sheet Metal</CommandTab>
            <CommandTab $w={63}>Weldments</CommandTab>
            <CommandTab $w={49}>Evaluate</CommandTab>
          </CommandTabs>

          <LeftDock>
            <ViewStrip>
              <Grip />
              {["cubeA", "cubeB", "cubeA", "cubeA", "cubeB", "cubeB", "fillet"].map((n, i) => (
                <StripButton key={i} aria-label={`View ${i + 1}`}><Icon name={n} size={13} faded={n === "fillet"} /></StripButton>
              ))}
              <StripLine />
              {["sheet", "note", "screen"].map((n) => (
                <StripButton key={n} aria-label={n}><Icon name={n} size={13} /></StripButton>
              ))}
              <StripLine />
              <StripButton aria-label="Section"><Icon name="cubeB" size={13} /></StripButton>
              <StripButton aria-label="Cut"><Icon name="cubeA" size={13} /></StripButton>
              <StripLine />
            </ViewStrip>
            <PropertyManager>
              <PanelHandle />
              <PanelTabs>
                {["feature", "props", "config", "target", "panelBall"].map((n) => (
                  <PanelTab key={n} $active={n === "props"} aria-label={n}><Icon name={n} size={12} /></PanelTab>
                ))}
              </PanelTabs>
              <PanelHead>
                <HeadRow>
                  <Icon name="cutExtrude" size={12} />
                  <PanelTitle>Cut-Extrude</PanelTitle>
                  <PlainButton aria-label="Help on Cut-Extrude"><Icon name="help" size={10} /></PlainButton>
                </HeadRow>
                <ActionRow>
                  <PlainButton aria-label="OK"><Icon name="check" size={10} /></PlainButton>
                  <PlainButton aria-label="Cancel"><Icon name="cross" size={9} /></PlainButton>
                  <PlainButton aria-label="Preview"><Icon name="eye" size={12} /></PlainButton>
                </ActionRow>
              </PanelHead>
              <Section>
                <SectionHead><SectionTitle>From</SectionTitle><PlainButton aria-label="Collapse From"><Icon name="up" size={10} /></PlainButton></SectionHead>
                <Field>
                  <FieldIcon />
                  <SelectWrap>
                    <GreySelect aria-label="From" disabled><option>Sketch Plane</option></GreySelect>
                    <Icon name="down" size={8} />
                  </SelectWrap>
                </Field>
              </Section>
              <Section>
                <SectionHead><SectionTitle>Direction 1</SectionTitle><PlainButton aria-label="Collapse Direction 1"><Icon name="up" size={10} /></PlainButton></SectionHead>
                <Fields>
                  <Field>
                    <FieldIcon $faded><Icon name="arrow" size={9} /></FieldIcon>
                    <SelectWrap>
                      <GreySelect aria-label="End condition" disabled><option>Up To Surface</option></GreySelect>
                      <Icon name="down" size={8} />
                    </SelectWrap>
                  </Field>
                  <Field>
                    <FieldIcon><Icon name="arrow" size={9} /></FieldIcon>
                    <Swatch $c="#55a4f3" />
                    <PickBox $h={31} aria-label="Direction of extrusion" />
                  </Field>
                  <Field>
                    <FieldIcon><Icon name="surface" size={13} /></FieldIcon>
                    <Swatch $c="#f483bd" />
                    <PickBox $h={20} $focus aria-label="Face or plane" />
                  </Field>
                  <TickLabel><Tick type="checkbox" />Flip side to cut</TickLabel>
                  <SpinRow>
                    <FieldIcon $faded><Icon name="draftAngle" size={12} /></FieldIcon>
                    <SpinInput aria-label="Draft angle" />
                    <Spinner>
                      <SpinButton aria-label="Increase"><Caret $dark /></SpinButton>
                      <SpinButton $down aria-label="Decrease"><Caret $dark /></SpinButton>
                    </Spinner>
                  </SpinRow>
                  <TickLabel><Tick type="checkbox" />Draft outward</TickLabel>
                </Fields>
              </Section>
              {["Direction 2", "Thin Feature", "Selected Contours"].map((t, i) => (
                <Section key={t}>
                  <FoldedHead>
                    {i < 2 && <Tick type="checkbox" aria-label={t} />}
                    <SectionTitle>{t}</SectionTitle>
                    <PlainButton aria-label={`Expand ${t}`}><Icon name="down" size={10} /></PlainButton>
                  </FoldedHead>
                </Section>
              ))}
            </PropertyManager>
            <SplitHandle />
          </LeftDock>

          <Viewport>
            <Scene />
            <TreeRoot><RightCaret /><Icon name="feature" size={13} />Dummy Assembly&nbsp; (...</TreeRoot>
            <HeadsUp>
              {["lens", "lensArea", "prevView", "section", "cubeView", "display", "eye", "scene", "scene", "monitor"].map((n, i) => (
                <HudButton key={i} $gap={[4, 5, 6, 8].includes(i)} aria-label={n}><Icon name={n} size={13} faded={n === "section"} /></HudButton>
              ))}
            </HeadsUp>
            <DocButtons>
              {["paneL", "paneR", "min", "restore", "close"].map((n) => (
                <PlainButton key={n} aria-label={n}><Icon name={n} size={10} /></PlainButton>
              ))}
            </DocButtons>
            <Confirm viewBox="0 0 50 40" fill="none" aria-label="Confirm or cancel">
              <path d="M5 9L10 14L20 4" stroke="#c5e0c2" strokeWidth="4.500" />
              <path d="M34 22L48 36M48 22L34 36" stroke="#efb9bd" strokeWidth="5" />
            </Confirm>
            <Popup role="dialog" aria-label="Select Other">
              <PopupHead>Select Other<PopupClose aria-label="Close" /></PopupHead>
              <PopupList><PopupItem>Face@Boss-Extrude1@[Dummy Block]</PopupItem></PopupList>
              <ScrollBar><Icon name="left" size={7} /><ScrollTrack /><Icon name="right" size={7} /></ScrollBar>
            </Popup>
          </Viewport>
          <TaskPane>
            {["home", "library", "open", "palette", "ball", "props", "forum", "chat"].map((n) => (
              <TaskTab key={n} $active={n === "library"} aria-label={n}><Icon name={n} size={12} /></TaskTab>
            ))}
          </TaskPane>
        </Workspace>

        <SheetTabs>
          <Stub />
          <SheetNav>
            {["M4 3v10M12 3L6 8l6 5z", "M11 3L5 8l6 5z", "M5 3l6 5-6 5z", "M12 3v10M4 3l6 5-6 5z"].map((d, i) => (
              <NavButton key={d} aria-label={["First", "Previous", "Next", "Last"][i]}>
                <Glyph viewBox="0 0 16 16" $size={8} fill="currentColor" stroke="currentColor"><path d={d} /></Glyph>
              </NavButton>
            ))}
          </SheetNav>
          <SheetTab $active $w={52}>Model</SheetTab>
          <SheetTab $w={96}>Motion Study 1</SheetTab>
        </SheetTabs>
        <StatusBar>Select a face or surface to complete the specification of Direction 1</StatusBar>

        <Sponsor>
          <SponsorSvg viewBox="963 582 317 126">
            <defs>
              <linearGradient id="ink" x1="0" y1="0" x2="0" y2="1"><stop offset="0" stopColor="#555" /><stop offset="1" stopColor="#111" /></linearGradient>
              <linearGradient id="blue" x1="0" y1="0" x2="0" y2="1"><stop offset="0" stopColor="#1a8ae4" /><stop offset="1" stopColor="#14347c" /></linearGradient>
            </defs>
            <path d="M1021 637Q1122 609 1226 637Q1122 613 1021 637Z" fill="#1b6fb8" stroke="#1b6fb8" strokeWidth="0.600" />
            <text x="1122" y="655" textAnchor="middle" fontFamily="DejaVu Sans" fontWeight="700" fontSize="32">
              <tspan fill="url(#ink)">CAD</tspan><tspan fill="url(#blue)">SPACE</tspan>
            </text>
            <text x="1126" y="667" textAnchor="middle" fontFamily="Liberation Sans" fontSize="12" letterSpacing="6" fill="#444">3D CAD SOFTWARE</text>
          </SponsorSvg>
        </Sponsor>
      </Page>
    </>
  );
}
